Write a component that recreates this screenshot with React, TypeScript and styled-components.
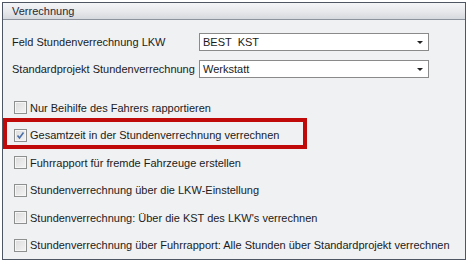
import styled, { createGlobalStyle } from 'styled-components';

const GlobalStyle = createGlobalStyle`
  html, body {
    margin: 0;
    padding: 0;
    background: #ffffff;
  }
  body {
    font-family: "Liberation Sans", Arial, sans-serif;
    font-size: 11px;
    color: #1b1b1b;
  }
`;

const Panel = styled.div`
  margin: 2px 0 0 2px;
  width: 464px;
  height: 258px;
  box-sizing: border-box;
  border: 1px solid #4e5663;
  background: #f0f1f3;
  display: flex;
  flex-direction: column;
`;

const Header = styled.div`
  height: 19px;
  border-bottom: 1px solid #8c939c;
  background: linear-gradient(to bottom, #f4f5f7 0%, #e6e8eb 55%, #d6d9de 100%);
  display: flex;
  align-items: center;
  padding-left: 9px;
  color: #1e2a3a;
  font-size: 11px;
`;

const Body = styled.div`
  display: flex;
  flex-direction: column;
  padding-top: 13px;
`;

const FieldRow = styled.div`
  display: flex;
  align-items: center;
  height: 18px;
  margin-bottom: 9px;
  padding-left: 9px;
`;

const FieldLabel = styled.div`
  width: 187px;
  flex-shrink: 0;
  white-space: nowrap;
`;

const Select = styled.div`
  width: 230px;
  height: 18px;
  box-sizing: border-box;
  border: 1px solid #8a8a8a;
  background: #ffffff;
  display: flex;
  align-items: center;
  padding-left: 3px;
  padding-right: 5px;
  white-space: pre;
`;

const SelectValue = styled.span`
  flex: 1;
`;

const Arrow = styled.span`
  width: 0;
  height: 0;
  border-left: 3px solid transparent;
  border-right: 3px solid transparent;
  border-top: 3px solid #222;
  margin-top: 1px;
`;

const CheckList = styled.div`
  margin-top: 7px;
  display: flex;
  flex-direction: column;
`;

const CheckRow = styled.div<{ $highlight?: boolean }>`
  position: relative;
  height: 27.5px;
  display: flex;
  align-items: center;
  padding-left: 11px;
  white-space: nowrap;

  ${(p) =>
    p.$highlight &&
    `
    &::after {
      content: '';
      position: absolute;
      left: 0;
      top: -4px;
      width: 304px;
      height: 31px;
      box-sizing: border-box;
      border: 4px solid #c00a0a;
    }
  `}
`;

const Box = styled.span`
  width: 13px;
  height: 13px;
  flex-shrink: 0;
  box-sizing: border-box;
  border: 1px solid #8e8f8f;
  background: linear-gradient(135deg, #dcdcdc 0%, #f4f4f4 100%);
  box-shadow: inset 0 0 0 1px #f6f6f6;
  margin-right: 3px;
  display: flex;
  align-items: center;
  justify-content: center;
`;

const items = [
  { text: 'Nur Beihilfe des Fahrers rapportieren' },
  { text: 'Gesamtzeit in der Stundenverrechnung verrechnen', checked: true },
  { text: 'Fuhrrapport für fremde Fahrzeuge erstellen' },
  { text: 'Stundenverrechnung über die LKW-Einstellung' },
  { text: "Stundenverrechnung: Über die KST des LKW's verrechnen" },
  { text: 'Stundenverrechnung über Fuhrrapport: Alle Stunden über Standardprojekt verrechnen' },
];

export default function App() {
  return (
    <>
      <GlobalStyle />
      <Panel>
        <Header>Verrechnung</Header>
        <Body>
          <FieldRow>
            <FieldLabel>Feld Stundenverrechnung LKW</FieldLabel>
            <Select>
              <SelectValue>BEST  KST</SelectValue>
              <Arrow />
            </Select>
          </FieldRow>
          <FieldRow>
            <FieldLabel>Standardprojekt Stundenverrechnung</FieldLabel>
            <Select>
              <SelectValue>Werkstatt</SelectValue>
              <Arrow />
            </Select>
          </FieldRow>
          <CheckList>
            {items.map((it) => (
              <CheckRow key={it.text} $highlight={it.checked}>
                <Box>
                  {it.checked && (
                    <svg width="9" height="9" viewBox="0 0 9 9">
                      <path d="M1.5 4.5 L3.5 7 L7.5 1.5" fill="none" stroke="#4a6fa8" strokeWidth="1.6" />
                    </svg>
                  )}
                </Box>
                {it.text}
              </CheckRow>
            ))}
          </CheckList>
        </Body>
      </Panel>
    </>
  );
}
